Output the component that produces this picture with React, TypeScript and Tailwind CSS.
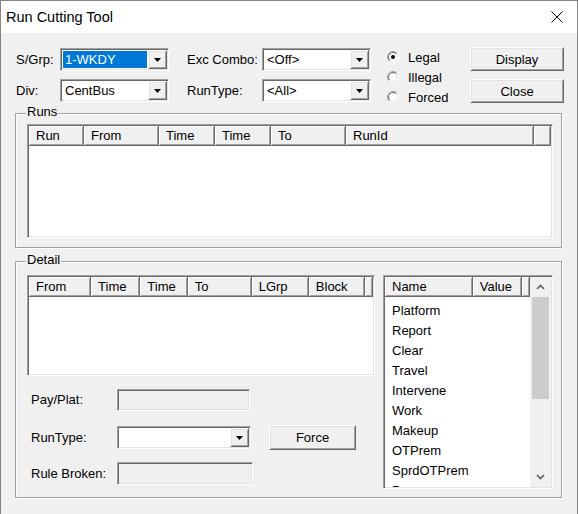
import type { ReactNode } from 'react';

const sunken =
  'border border-t-[#a0a0a0] border-l-[#a0a0a0] border-r-white border-b-white shadow-[inset_1px_1px_0_#696969,inset_-1px_-1px_0_#e3e3e3] p-[1px]';
const raised =
  'border border-t-white border-l-white border-r-[#696969] border-b-[#696969] shadow-[inset_1px_1px_0_#e3e3e3,inset_-1px_-1px_0_#a0a0a0]';
const headerCell =
  'h-full flex items-center pl-[7px] border-r border-b border-r-[#696969] border-b-[#696969] shadow-[inset_1px_1px_0_#fff,inset_-1px_-1px_0_#a0a0a0] bg-[#f0f0f0] whitespace-nowrap overflow-hidden';

const RUN_COLS = [
  { label: 'Run', w: 'w-[55px]' },
  { label: 'From', w: 'w-[75px]' },
  { label: 'Time', w: 'w-[56px]' },
  { label: 'Time', w: 'w-[56px]' },
  { label: 'To', w: 'w-[75px]' },
  { label: 'RunId', w: 'w-[188px]' },
];

const DETAIL_COLS = [
  { label: 'From', w: 'w-[63px]' },
  { label: 'Time', w: 'w-[50px]' },
  { label: 'Time', w: 'w-[48px]' },
  { label: 'To', w: 'w-[65px]' },
  { label: 'LGrp', w: 'w-[58px]' },
  { label: 'Block', w: 'w-[57px]' },
];

const PAY_ITEMS = ['Platform', 'Report', 'Clear', 'Travel', 'Intervene', 'Work', 'Makeup', 'OTPrem', 'SprdOTPrem', 'Pay'];

function DropButton() {
  return (
    <div className={`w-[19px] h-full flex items-center justify-center bg-[#f0f0f0] ${raised}`}>
      <svg width="7" height="4" viewBox="0 0 7 4">
        <path d="M0 0h7L3.5 4z" fill="#000" />
      </svg>
    </div>
  );
}

function Combo({ value, w, selected }: { value?: string; w: string; selected?: boolean }) {
  return (
    <div className={`flex h-[23px] bg-white ${w} ${sunken}`}>
      <div className="flex-1 flex items-stretch min-w-0">
        {value &&
          (selected ? (
            <span className="flex-1 m-[1px] pl-[2px] flex items-center bg-[#0078d7] text-white">{value}</span>
          ) : (
            <span className="flex-1 pl-[3px] flex items-center">{value}</span>
          ))}
      </div>
      <DropButton />
    </div>
  );
}

function Button({ children, w, h }: { children: ReactNode; w: string; h: string }) {
  return (
    <div className={`flex items-center justify-center pt-[1px] bg-[#f0f0f0] ${w} ${h} ${raised}`}>{children}</div>
  );
}

function Radio({ label, checked }: { label: string; checked?: boolean }) {
  return (
    <div className="h-[20px] flex items-center gap-[9px]">
      <svg width="12" height="12" viewBox="0 0 12 12">
        <defs>
          <linearGradient id="rOuter" x1="0" y1="0" x2="1" y2="1">
            <stop offset="0.5" stopColor="#a0a0a0" />
            <stop offset="0.5" stopColor="#ffffff" />
          </linearGradient>
          <linearGradient id="rInner" x1="0" y1="0" x2="1" y2="1">
            <stop offset="0.5" stopColor="#696969" />
            <stop offset="0.5" stopColor="#e3e3e3" />
          </linearGradient>
        </defs>
        <circle cx="6" cy="6" r="5.5" fill="none" stroke="url(#rOuter)" />
        <circle cx="6" cy="6" r="4.5" fill="#fff" stroke="url(#rInner)" />
        {checked && <circle cx="6" cy="6" r="2" fill="#000" />}
      </svg>
      <span className="pt-[2px]">{label}</span>
    </div>
  );
}

function Group({ title, className, children }: { title: string; className: string; children: ReactNode }) {
  return (
    <div
      className={`relative ml-[14px] w-[547px] border border-[#a0a0a0] shadow-[inset_1px_1px_0_#fff,1px_1px_0_#fff] ${className}`}
    >
      <span className="absolute -top-[10px] left-[10px] px-[1px] leading-[16px] bg-[#f0f0f0]">{title}</span>
      {children}
    </div>
  );
}

function Header({ cols }: { cols: { label: string; w: string }[] }) {
  return (
    <div className="flex h-[20px] shrink-0">
      {cols.map((c, i) => (
        <div key={i} className={`${headerCell} ${c.w}`}>
          {c.label}
        </div>
      ))}
      <div className={`${headerCell} flex-1`} />
    </div>
  );
}

function ScrollBar() {
  return (
    <div className="w-[21px] h-full flex flex-col bg-[#f0f0f0]">
      <div className="h-[20px] flex items-center justify-center">
        <svg width="9" height="6" viewBox="0 0 9 6">
          <path d="M1 5l3.5-3.5L8 5" fill="none" stroke="#606060" strokeWidth="1.6" />
        </svg>
      </div>
      <div className="h-[102px] mx-[2px] bg-[#cdcdcd]" />
      <div className="flex-1" />
      <div className="h-[20px] flex items-center justify-center">
        <svg width="9" height="6" viewBox="0 0 9 6">
          <path d="M1 1l3.5 3.5L8 1" fill="none" stroke="#606060" strokeWidth="1.6" />
        </svg>
      </div>
    </div>
  );
}

export default function App() {
  return (
    <div className="w-[578px] h-[514px] overflow-hidden bg-[#f0f0f0] border-x border-t border-[#858585] text-[13px] text-black font-['Liberation_Sans',Arial,sans-serif] select-none">
      {/* Title bar */}
      <div className="h-[32px] bg-white flex items-center justify-between pl-[5px] pr-[14px]">
        <span className="text-[14.5px] pt-[1px]">Run Cutting Tool</span>
        <svg width="12" height="12" viewBox="0 0 12 12">
          <path d="M0.5 0.5l11 11M11.5 0.5l-11 11" stroke="#000" strokeWidth="1" />
        </svg>
      </div>

      {/* Filters, run type and actions */}
      <div className="flex h-[56px] mt-[14px] pl-[15px]">
        <div className="flex flex-col gap-[8px] mt-[1px]">
          <div className="flex items-center h-[23px]">
            <span className="w-[44px]">S/Grp:</span>
            <Combo value="1-WKDY" w="w-[109px]" selected />
            <span className="w-[75px] ml-[18px]">Exc Combo:</span>
            <Combo value="<Off>" w="w-[109px]" />
          </div>
          <div className="flex items-center h-[23px]">
            <span className="w-[44px]">Div:</span>
            <Combo value="CentBus" w="w-[109px]" />
            <span className="w-[75px] ml-[18px]">RunType:</span>
            <Combo value="<All>" w="w-[109px]" />
          </div>
        </div>
        <div className="w-[83px] ml-[16px] flex flex-col">
          <Radio label="Legal" checked />
          <Radio label="Illegal" />
          <Radio label="Forced" />
        </div>
        <div className="flex flex-col gap-[8px]">
          <Button w="w-[94px]" h="h-[24px]">Display</Button>
          <Button w="w-[94px]" h="h-[24px]">Close</Button>
        </div>
      </div>

      {/* Runs */}
      <Group title="Runs" className="mt-[10px] h-[135px] pt-[10px] pl-[11px]">
        <div className={`w-[526px] h-[114px] bg-white flex flex-col ${sunken}`}>
          <Header cols={RUN_COLS} />
        </div>
      </Group>

      {/* Detail */}
      <Group title="Detail" className="mt-[13px] h-[237px] pt-[13px] pl-[11px] flex gap-[8px]">
        <div className="w-[348px] flex flex-col">
          <div className={`h-[101px] bg-white flex flex-col ${sunken}`}>
            <Header cols={DETAIL_COLS} />
          </div>
          <div className="mt-[13px] h-[22px] flex items-center">
            <span className="w-[86px] ml-[4px]">Pay/Plat:</span>
            <div className={`w-[133px] h-[22px] ${sunken}`} />
          </div>
          <div className="mt-[14px] h-[25px] flex items-center">
            <span className="w-[86px] ml-[4px]">RunType:</span>
            <Combo w="w-[134px]" />
            <div className="ml-[18px]">
              <Button w="w-[87px]" h="h-[25px]">Force</Button>
            </div>
          </div>
          <div className="mt-[12px] h-[23px] flex items-center">
            <span className="w-[86px] ml-[4px]">Rule Broken:</span>
            <div className={`w-[136px] h-[23px] ${sunken}`} />
          </div>
        </div>

        <div className={`w-[170px] h-[214px] bg-white flex ${sunken}`}>
          <div className="flex-1 flex flex-col overflow-hidden">
            <Header
              cols={[
                { label: 'Name', w: 'w-[93px]' },
                { label: 'Value', w: 'w-[52px]' },
              ]}
            />
            <div className="pt-[4px] pl-[7px]">
              {PAY_ITEMS.map((item) => (
                <div key={item} className="h-[20px] flex items-center">
                  {item}
                </div>
              ))}
            </div>
          </div>
          <ScrollBar />
        </div>
      </Group>
    </div>
  );
}
